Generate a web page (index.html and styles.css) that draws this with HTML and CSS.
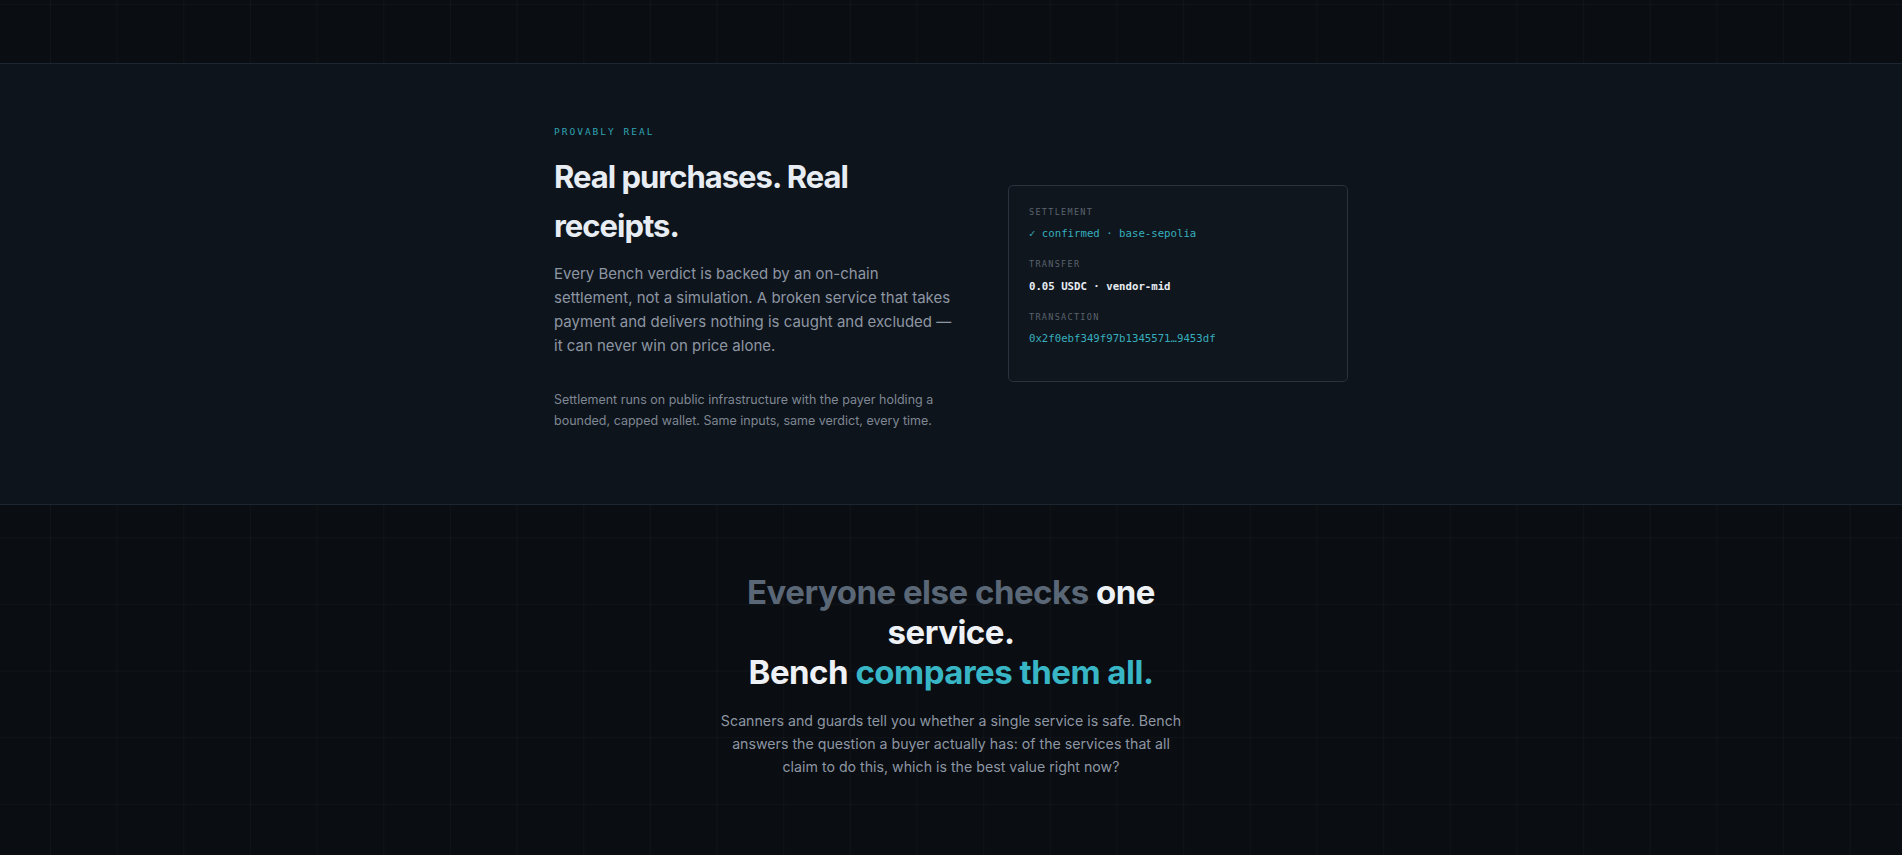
FILE: index.html
```html
<!DOCTYPE html>
<html lang="en">

<head>
    <meta charset="UTF-8">
    <meta name="viewport" content="width=device-width, initial-scale=1.0">
    <title>Bench</title>
    <link rel="stylesheet" href="styles.css">
</head>

<body>
    <!-- tail of the previous band -->
    <div class="lead-in"></div>

    <!-- provably real -->
    <section class="proof">
        <div class="proof-inner">
            <div class="proof-copy">
                <p class="eyebrow">PROVABLY REAL</p>
                <h2 class="proof-title">Real purchases. Real receipts.</h2>
                <p class="proof-text">Every Bench verdict is backed by an on-chain settlement, not a simulation. A broken service that takes payment and delivers nothing is caught and excluded — it can never win on price alone.</p>
                <p class="proof-note">Settlement runs on public infrastructure with the payer holding a bounded, capped wallet. Same inputs, same verdict, every time.</p>
            </div>

            <div class="receipt">
                <div class="receipt-row">
                    <span class="receipt-label">SETTLEMENT</span>
                    <span class="receipt-value teal">✓ confirmed · base-sepolia</span>
                </div>
                <div class="receipt-row">
                    <span class="receipt-label">TRANSFER</span>
                    <span class="receipt-value strong">0.05 USDC · vendor-mid</span>
                </div>
                <div class="receipt-row">
                    <span class="receipt-label">TRANSACTION</span>
                    <span class="receipt-value teal">0x2f0ebf349f97b1345571…9453df</span>
                </div>
            </div>
        </div>
    </section>

    <!-- comparison pitch -->
    <section class="compare">
        <h2 class="compare-title"><span class="muted">Everyone else checks</span> one service.<br>Bench <span class="accent">compares them all.</span></h2>
        <p class="compare-text">Scanners and guards tell you whether a single service is safe. Bench answers the question a buyer actually has: of the services that all claim to do this, which is the best value right now?</p>
    </section>
</body>

</html>
```

FILE: styles.css
```css
/*Reset*/
* {
    margin: 0;
    padding: 0;
    box-sizing: border-box;
}

html,
body {
    height: 100%;
}

body {
    font-family: 'Inter', 'Noto Sans', sans-serif;
    color: #e6ebf1;
    background-color: #0a0d11;
    /* rejilla tenue de fondo */
    background-image:
        linear-gradient(rgba(255, 255, 255, 0.028) 1px, transparent 1px),
        linear-gradient(90deg, rgba(255, 255, 255, 0.028) 1px, transparent 1px);
    background-size: 66.67px 66.67px;
    background-position: 50px 4px;
    overflow: hidden;
}

.lead-in {
    height: 64px;
    border-bottom: 1px solid #1c2530;
}

/* Bloque "provably real" */
.proof {
    background-color: #0e141b;
    border-bottom: 1px solid #1c2530;
    padding: 60px 0 73px;
}

.proof-inner {
    width: 794px;
    margin: 0 auto;
    display: grid;
    grid-template-columns: 400px 340px;
    justify-content: space-between;
    align-items: center;
}

.eyebrow {
    font-family: 'DejaVu Sans Mono', monospace;
    font-size: 9.5px;
    letter-spacing: 2px;
    color: #2ea3b3;
    line-height: 16px;
    margin-bottom: 12px;
}

.proof-title {
    font-size: 31px;
    font-weight: 700;
    line-height: 49px;
    letter-spacing: -1px;
    color: #e8edf3;
    margin-bottom: 12px;
}

.proof-text {
    font-size: 15px;
    line-height: 24px;
    color: #8d96a3;
    margin-bottom: 31px;
}

.proof-note {
    font-size: 12.5px;
    line-height: 21px;
    color: #7e8794;
}

/* Tarjeta de recibo */
.receipt {
    border: 1px solid #29323d;
    border-radius: 5px;
    background-color: #10161d;
    padding: 20px 20px 35px;
    display: flex;
    flex-direction: column;
    gap: 17px;
    margin-top: 12px;
}

.receipt-row {
    display: flex;
    flex-direction: column;
    gap: 8.5px;
}

.receipt-label {
    font-family: 'DejaVu Sans Mono', monospace;
    font-size: 8.5px;
    letter-spacing: 1.3px;
    color: #5a636e;
    line-height: 12px;
}

.receipt-value {
    font-family: 'DejaVu Sans Mono', monospace;
    font-size: 10.7px;
    line-height: 15px;
}

.receipt-value.teal {
    color: #36aebe;
}

.receipt-value.strong {
    color: #e8edf3;
    font-weight: 700;
}

/* Bloque de comparación */
.compare {
    padding: 67px 0 0;
    display: flex;
    flex-direction: column;
    align-items: center;
    text-align: center;
}

.compare-title {
    max-width: 470px;
    font-size: 33px;
    font-weight: 700;
    line-height: 40px;
    letter-spacing: -0.5px;
    color: #eef2f6;
    margin-bottom: 17px;
}

.compare-title .muted {
    color: #5a6777;
}

.compare-title .accent {
    color: #38b6c6;
}

.compare-text {
    max-width: 470px;
    font-size: 14.2px;
    line-height: 23px;
    color: #8d96a3;
}
```
